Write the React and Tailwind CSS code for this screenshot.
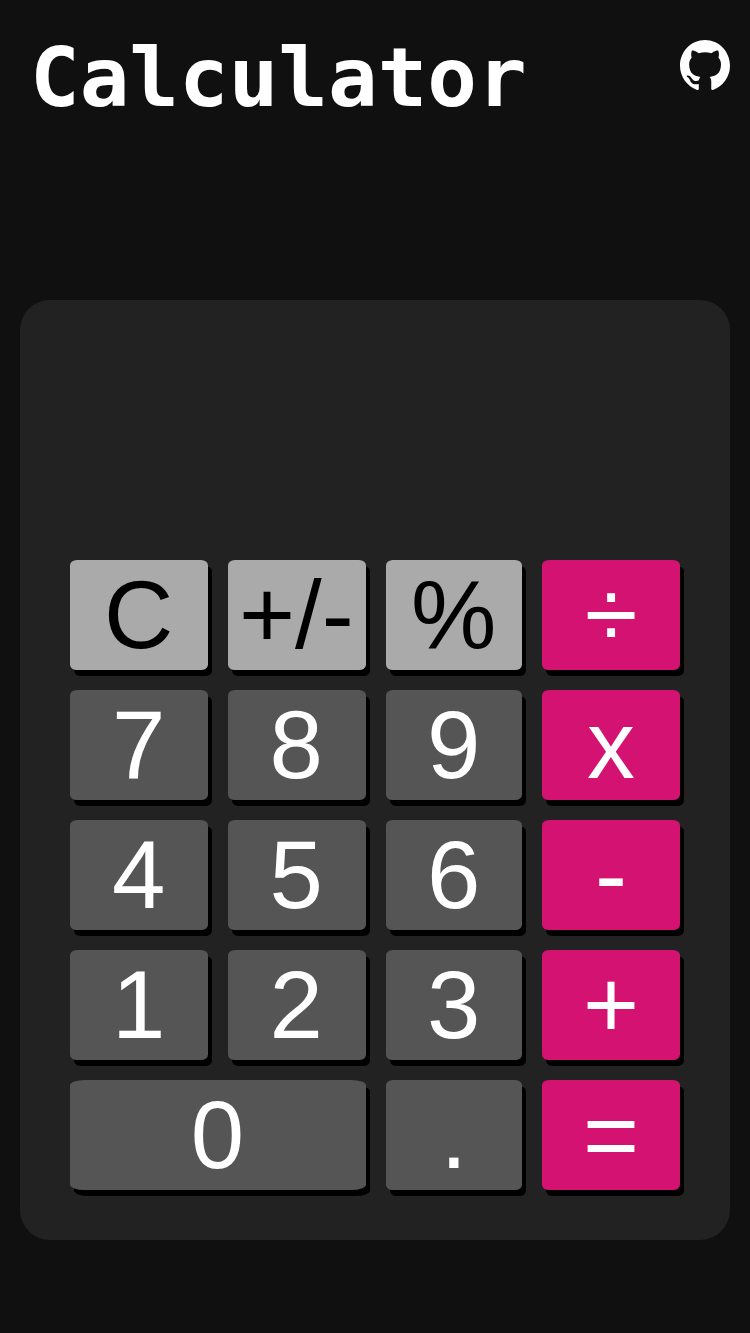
import React from 'react';

const tones = {
  light: 'bg-[#aaaaaa] text-black',
  dark: 'bg-[#555555] text-white',
  accent: 'bg-[#d41272] text-white',
};

const keys = [
  ['C', 'light', 'pr-[0.5px]'], ['+/-', 'light', 'pr-[1.5px]'], ['%', 'light', 'pr-[0.5px]'], ['÷', 'accent'],
  ['7', 'dark', 'pr-[0.5px]'], ['8', 'dark', 'pr-[1.5px]'], ['9', 'dark', 'pr-[0.5px]'], ['x', 'accent'],
  ['4', 'dark', 'pr-[0.5px]'], ['5', 'dark', 'pr-[1.5px]'], ['6', 'dark', 'pr-[0.5px]'], ['-', 'accent'],
  ['1', 'dark', 'pr-[0.5px]'], ['2', 'dark', 'pr-[1.5px]'], ['3', 'dark', 'pr-[0.5px]'], ['+', 'accent'],
  ['0', 'dark', 'col-span-2 pr-px'], ['.', 'dark', 'pr-[0.5px]'], ['=', 'accent'],
];

function Key({ label, tone, extra = '' }) {
  return (
    <button
      className={`flex items-center justify-center rounded-[5%] text-[96px] leading-[110px] whitespace-nowrap shadow-[4px_6px_0_#000] ${tones[tone]} ${extra}`}
    >
      {label}
    </button>
  );
}

function GithubMark() {
  return (
    <svg viewBox="0 0 16 15.62" preserveAspectRatio="none" className="h-[50px] w-[50px]" fill="#fff" aria-label="GitHub">
      <path
        fillRule="evenodd"
        d="M8 0C3.58 0 0 3.58 0 8c0 3.54 2.29 6.53 5.47 7.59.4.07.55-.17.55-.38 0-.19-.01-.82-.01-1.49-2.01.37-2.53-.49-2.69-.94-.09-.23-.48-.94-.82-1.13-.28-.15-.68-.52-.01-.53.63-.01 1.08.58 1.23.82.72 1.21 1.87.87 2.33.66.07-.52.28-.87.51-1.07-1.78-.2-3.64-.89-3.64-3.95 0-.87.31-1.59.82-2.15-.08-.2-.36-1.02.08-2.12 0 0 .67-.21 2.2.82.64-.18 1.32-.27 2-.27s1.36.09 2 .27c1.53-1.04 2.2-.82 2.2-.82.44 1.1.16 1.92.08 2.12.51.56.82 1.27.82 2.15 0 3.07-1.87 3.75-3.65 3.95.29.25.54.73.54 1.48 0 1.07-.01 1.93-.01 2.2 0 .21.15.46.55.38A8.01 8.01 0 0 0 16 8c0-4.42-3.58-8-8-8z"
      />
    </svg>
  );
}

export default function App() {
  return (
    <div className="flex h-[1333px] w-full flex-col bg-[#101010] px-[20px] font-['Liberation_Sans',sans-serif]">
      <header className="flex h-[300px] shrink-0 items-start justify-between pt-[40px]">
        <h1 className="pl-[10px] font-['DejaVu_Sans_Mono',monospace] text-[82.5px] leading-[74px] font-bold text-white">
          Calculator
        </h1>
        <GithubMark />
      </header>
      <main className="flex h-[940px] shrink-0 flex-col justify-end rounded-[30px] bg-[#222222] p-[50px]">
        <div className="grid auto-rows-[110px] grid-cols-[138px_138px_136px_138px] gap-[20px]">
          {keys.map(([label, tone, extra]) => (
            <Key key={label} label={label} tone={tone} extra={extra} />
          ))}
        </div>
      </main>
    </div>
  );
}
